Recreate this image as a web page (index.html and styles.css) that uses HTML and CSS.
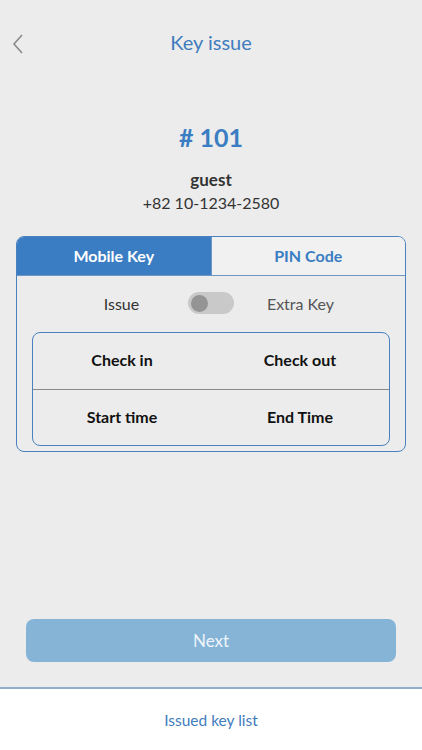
FILE: index.html
```html
<!DOCTYPE html>
<html lang="en">
<head>
    <meta charset="UTF-8">
    <meta name="viewport" content="width=device-width, initial-scale=1.0">
    <title>Key issue</title>
    <link rel="stylesheet" href="styles.css">
</head>
<body>
    <div class="screen">
        <header class="nav">
            <span class="back">
                <svg width="12" height="20" viewBox="0 0 12 20"><path d="M10 1 L2 10 L10 19" fill="none" stroke="#8a8a8a" stroke-width="1.6"/></svg>
            </span>
            <h1>Key issue</h1>
        </header>

        <div class="room">
            <div class="room-no"># 101</div>
            <div class="guest">guest</div>
            <div class="phone">+82 10-1234-2580</div>
        </div>

        <div class="card">
            <div class="tabs">
                <div class="tab active">Mobile Key</div>
                <div class="tab">PIN Code</div>
            </div>
            <div class="switch-row">
                <span class="lbl">Issue</span>
                <span class="lbl extra">Extra Key</span>
                <span class="toggle"><span class="knob"></span></span>
            </div>
            <div class="times">
                <div class="row">
                    <div>Check in</div>
                    <div>Check out</div>
                </div>
                <div class="row">
                    <div>Start time</div>
                    <div>End Time</div>
                </div>
            </div>
        </div>

        <div class="spacer"></div>

        <div class="actions">
            <button class="next" disabled>Next</button>
        </div>

        <footer class="footer">Issued key list</footer>
    </div>
</body>
</html>
```

FILE: styles.css
```css
html, body {
    margin: 0;
    padding: 0;
}
body {
    font-family: Lato, "Noto Sans", sans-serif;
    background: #ececec;
}
.screen {
    height: 750px;
    display: flex;
    flex-direction: column;
}
.nav {
    height: 86px;
    display: flex;
    align-items: center;
    justify-content: center;
    position: relative;
}
.nav h1 {
    margin: 0;
    font-size: 20px;
    font-weight: 400;
    color: #3f7cbd;
    position: relative;
    top: -1px;
}
.back {
    position: absolute;
    left: 12px;
    top: 34px;
}
.room {
    text-align: center;
    padding-top: 36px;
}
.room-no {
    font-size: 25px;
    font-weight: 700;
    color: #3a7dc2;
    line-height: 30px;
}
.guest {
    margin-top: 18px;
    font-size: 17px;
    font-weight: 700;
    color: #333;
    line-height: 20px;
}
.phone {
    margin-top: 3px;
    font-size: 16px;
    color: #333;
    line-height: 20px;
}
.card {
    margin: 23px 16px 0;
    border: 1px solid #4a82bf;
    border-radius: 8px;
    overflow: hidden;
    padding-bottom: 5px;
}
.tabs {
    display: flex;
    border-bottom: 1px solid #6f97c4;
}
.tab {
    flex: 1;
    height: 38px;
    line-height: 38px;
    text-align: center;
    font-size: 16px;
    font-weight: 700;
    color: #3a7dc2;
    background: #f1f1f1;
}
.tab.active {
    background: #3a7dc2;
    color: #fff;
    border-right: 1px solid #6f97c4;
}
.switch-row {
    height: 54px;
    margin: 0 15px;
    display: grid;
    grid-template-columns: 1fr 1fr;
    align-items: center;
    font-size: 16px;
}
.lbl {
    grid-row: 1;
    grid-column: 1;
    color: #333;
    text-align: center;
}
.lbl.extra {
    grid-column: 2;
    color: #555;
}
.toggle {
    grid-row: 1;
    grid-column: 1 / 3;
    justify-self: center;
    width: 46px;
    height: 22px;
    border-radius: 11px;
    background: #c9c9c9;
    display: flex;
    align-items: center;
    padding-left: 3px;
    box-sizing: border-box;
}
.knob {
    width: 17px;
    height: 17px;
    border-radius: 50%;
    background: #949494;
}
.times {
    margin: 2px 15px 0;
    border: 1px solid #4a82bf;
    border-radius: 8px;
}
.row {
    display: flex;
    height: 56px;
    box-sizing: border-box;
    padding-bottom: 3px;
    align-items: center;
}
.row + .row {
    border-top: 1px solid #8a8a8a;
}
.row div {
    flex: 1;
    text-align: center;
    font-size: 16px;
    font-weight: 700;
    color: #111;
}
.spacer {
    flex: 1;
}
.actions {
    padding: 0 26px 25px;
}
.next {
    width: 100%;
    height: 43px;
    border: none;
    border-radius: 8px;
    background: #85b4d7;
    color: #eef5fa;
    font-family: inherit;
    font-size: 17px;
}
.footer {
    height: 61px;
    border-top: 2px solid #8fb0cc;
    background: #fff;
    color: #3f7cbd;
    font-size: 15.5px;
    display: flex;
    align-items: center;
    justify-content: center;
}
```
